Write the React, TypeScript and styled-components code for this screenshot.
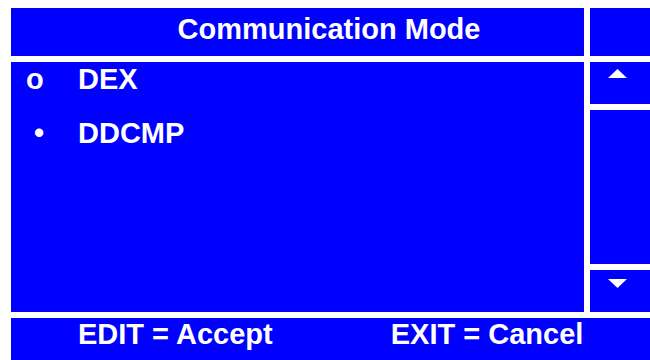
import React from "react";
import styled, { createGlobalStyle } from "styled-components";

const GlobalStyle = createGlobalStyle`
  html, body {
    margin: 0;
    padding: 0;
    background: #ffffff;
    overflow: hidden;
  }
  body {
    font-family: "Liberation Sans", Arial, sans-serif;
  }
`;

const BLUE = "#0000ff";

const Screen = styled.div`
  display: grid;
  grid-template-columns: 573px 60px;
  grid-template-rows: 48px 250px 42px;
  gap: 6px;
  padding: 8px 0 0 11px;
  width: 650px;
  height: 360px;
  box-sizing: border-box;
  overflow: hidden;
`;

const Panel = styled.div`
  background: ${BLUE};
  color: #ffffff;
  font-weight: bold;
  font-size: 29px;
`;

const Title = styled(Panel)`
  line-height: 42px;
  text-align: center;
  padding-left: 63px;
`;

const List = styled(Panel)`
  display: flex;
  flex-direction: column;
  gap: 20px;
  padding-left: 15px;
`;

const Row = styled.div`
  display: flex;
  line-height: 34px;
  white-space: pre;
`;

const Marker = styled.span`
  width: 52px;
`;

const Side = styled.div`
  display: grid;
  grid-template-rows: 42px 1fr 42px;
  gap: 6px;
`;

const SideButton = styled.div<{ $top: number }>`
  background: ${BLUE};
  padding: ${(p) => p.$top}px 0 0 18px;
  box-sizing: border-box;
`;

const Footer = styled(Panel)`
  grid-column: 1 / span 2;
  display: flex;
  gap: 118px;
  padding-left: 67px;
  line-height: 32px;
`;

const Arrow = ({ up }: { up?: boolean }) => (
  <svg width="19" height="9" viewBox="0 0 19 9" style={{ display: "block" }}>
    <polygon
      points={up ? "9.5,0 19,9 0,9" : "0,0 19,0 9.5,9"}
      fill="#ffffff"
    />
  </svg>
);

const options = [
  { mark: "o", label: "DEX" },
  { mark: " •", label: "DDCMP" },
];

export default function App() {
  return (
    <>
      <GlobalStyle />
      <Screen>
        <Title>Communication Mode</Title>
        <SideButton $top={0} />
        <List>
          {options.map((o) => (
            <Row key={o.label}>
              <Marker>{o.mark}</Marker>
              <span>{o.label}</span>
            </Row>
          ))}
        </List>
        <Side>
          <SideButton $top={7}>
            <Arrow up />
          </SideButton>
          <SideButton $top={0} />
          <SideButton $top={9}>
            <Arrow />
          </SideButton>
        </Side>
        <Footer>
          <span>EDIT = Accept</span>
          <span>EXIT = Cancel</span>
        </Footer>
      </Screen>
    </>
  );
}
